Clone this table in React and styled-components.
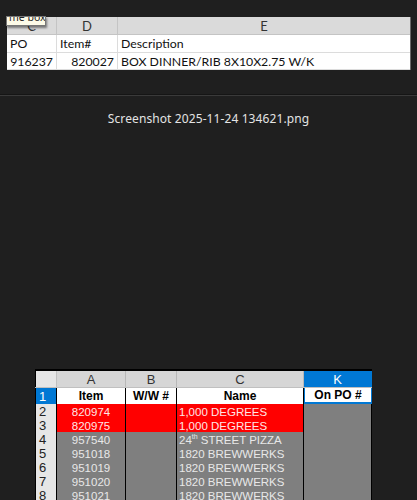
import React from 'react';
import styled, { createGlobalStyle } from 'styled-components';

const GlobalStyle = createGlobalStyle`
  html, body {
    margin: 0;
    padding: 0;
    background: #1f1f1f;
  }
`;

const Page = styled.div`
  width: 417px;
  height: 500px;
  overflow: hidden;
  display: flex;
  flex-direction: column;
  background: #1f1f1f;
`;

/* ---------- top sheet ---------- */

const TopArea = styled.div`
  padding: 17px 0 0 7px;
  height: 94px;
  box-sizing: border-box;
  flex: none;
`;

const TopSheet = styled.div`
  position: relative;
  width: 403px;
  background: #fff;
  border-right: 1px solid #6a6a6a;
  font-family: Lato, "Open Sans", sans-serif;
  font-size: 12.3px;
  color: #111;
`;

const TopRow = styled.div`
  display: grid;
  grid-template-columns: 50px 61px 1fr;
  height: ${({ $h }) => $h}px;
  background: ${({ $head }) => ($head ? '#dadada' : '#fff')};
  border-bottom: 1px solid ${({ $head }) => ($head ? '#c4c4c4' : '#dcdcdc')};
`;

const TopCell = styled.div`
  display: flex;
  align-items: center;
  justify-content: ${({ $align }) => $align || 'flex-start'};
  padding: 0 3px;
  border-right: 1px solid ${({ $head }) => ($head ? '#c4c4c4' : '#dcdcdc')};
  color: ${({ $head }) => ($head ? '#333' : '#111')};
  font-size: ${({ $head }) => ($head ? '13px' : 'inherit')};
  white-space: nowrap;
  overflow: hidden;
  &:last-child {
    border-right: none;
  }
`;

const Tip = styled.div`
  position: absolute;
  left: -1px;
  top: -1px;
  width: 40px;
  height: 10px;
  overflow: hidden;
  white-space: nowrap;
  background: #fdfbe8;
  border: 1px solid #777;
  box-shadow: 1px 2px 2px rgba(0, 0, 0, 0.45);
  font-family: "Noto Sans", sans-serif;
  font-size: 10.5px;
  color: #222;
  line-height: 1;
  padding-left: 2px;
  box-sizing: border-box;
`;

const TipText = styled.span`
  display: block;
  margin-top: -5px;
`;

/* ---------- caption ---------- */

const Divider = styled.div`
  flex: none;
  border-top: 1px solid #151515;
  border-bottom: 1px solid #3a3a3a;
`;

const Caption = styled.div`
  margin-top: 14px;
  text-align: center;
  font-family: "Noto Sans", "Open Sans", sans-serif;
  font-size: 12px;
  color: #e4e4e4;
  letter-spacing: 0.1px;
`;

const Spacer = styled.div`
  flex: 1;
`;

/* ---------- bottom sheet ---------- */

const BottomSheet = styled.div`
  margin-left: 35px;
  width: 337px;
  border-top: 2px solid #000;
  flex: none;
  height: 129px;
  overflow: hidden;
  font-family: "Liberation Sans", Arial, sans-serif;
  font-size: 11px;
`;

const Row = styled.div`
  display: grid;
  grid-template-columns: 22px 69px 51px 127px 68px;
  height: ${({ $h }) => $h}px;
  box-sizing: border-box;
  border-bottom: 1px solid ${({ $line }) => $line || '#000'};
`;

const RowNum = styled.div`
  display: flex;
  align-items: center;
  padding-left: 3px;
  background: ${({ $active }) => ($active ? '#0078d4' : '#e6e6e6')};
  color: ${({ $active }) => ($active ? '#fff' : '#222')};
  font-size: 13px;
  border-right: 1px solid #000;
  border-left: 1px solid #000;
`;

const ColHead = styled.div`
  display: flex;
  align-items: center;
  justify-content: center;
  background: ${({ $sel }) => ($sel ? '#0078d4' : '#d6d6d6')};
  color: ${({ $sel }) => ($sel ? '#fff' : '#333')};
  border-right: 1px solid ${({ $sel }) => ($sel ? '#0078d4' : '#b8b8b8')};
  font-size: 13px;
`;

const Corner = styled(ColHead)`
  background: #e6e6e6;
  border-left: 1px solid #000;
  border-right: 1px solid #c0c0c0;
`;

const Title = styled.div`
  display: flex;
  align-items: center;
  justify-content: center;
  background: #fff;
  color: #000;
  font-weight: 900;
  font-size: 12px;
  border-right: 1px solid #000;
  ${({ $sel }) =>
    $sel &&
    `
    border-left: 1px solid #0078d4;
    border-bottom: 2px solid #0078d4;
    border-right: 1px solid #0078d4;
  `}
`;

const Cell = styled.div`
  display: flex;
  align-items: center;
  justify-content: ${({ $center }) => ($center ? 'center' : 'flex-start')};
  padding-left: ${({ $center }) => ($center ? 0 : 2)}px;
  background: ${({ $red }) => ($red ? '#ff0000' : '#7f7f7f')};
  color: ${({ $red }) => ($red ? '#ffe6e6' : '#e8e8e8')};
  border-right: 1px solid #000;
  white-space: nowrap;
  overflow: hidden;
  font-size: 11.5px;
`;

const Sup = styled.sup`
  font-size: 7px;
  vertical-align: 5px;
  line-height: 0;
`;

const Squiggle = styled.span`
  text-decoration: underline wavy #e03030;
  text-decoration-thickness: 1px;
  text-underline-offset: 2px;
`;

const rows = [
  { n: 2, item: '820974', name: '1,000 DEGREES', red: true },
  { n: 3, item: '820975', name: '1,000 DEGREES', red: true },
  { n: 4, item: '957540', name: 'pizza' },
  { n: 5, item: '951018', name: 'brew' },
  { n: 6, item: '951019', name: 'brew' },
  { n: 7, item: '951020', name: 'brew' },
  { n: 8, item: '951021', name: 'brew' },
];

const renderName = (name) => {
  if (name === 'pizza') {
    return (
      <span>
        24<Sup>th</Sup> STREET PIZZA
      </span>
    );
  }
  if (name === 'brew') {
    return (
      <span>
        1820 <Squiggle>BREWWERKS</Squiggle>
      </span>
    );
  }
  return name;
};

export default function App() {
  return (
    <Page>
      <GlobalStyle />
      <TopArea>
        <TopSheet>
          <TopRow $head $h={17}>
            <TopCell $head $align="center">C</TopCell>
            <TopCell $head $align="center">D</TopCell>
            <TopCell $head $align="center">E</TopCell>
          </TopRow>
          <TopRow $h={17}>
            <TopCell>PO</TopCell>
            <TopCell>Item#</TopCell>
            <TopCell>Description</TopCell>
          </TopRow>
          <TopRow $h={16}>
            <TopCell $align="flex-end">916237</TopCell>
            <TopCell $align="flex-end">820027</TopCell>
            <TopCell>BOX DINNER/RIB 8X10X2.75 W/K</TopCell>
          </TopRow>
          <Tip>
            <TipText>me box</TipText>
          </Tip>
        </TopSheet>
      </TopArea>

      <Divider />
      <Caption>Screenshot 2025-11-24 134621.png</Caption>
      <Spacer />

      <BottomSheet>
        <Row $h={17} $line="#c0c0c0">
          <Corner />
          <ColHead>A</ColHead>
          <ColHead>B</ColHead>
          <ColHead>C</ColHead>
          <ColHead $sel>K</ColHead>
        </Row>
        <Row $h={16}>
          <RowNum $active>1</RowNum>
          <Title>Item</Title>
          <Title>W/W #</Title>
          <Title>Name</Title>
          <Title $sel>On PO #</Title>
        </Row>
        {rows.map((r) => (
          <Row key={r.n} $h={14}>
            <RowNum>{r.n}</RowNum>
            <Cell $center $red={r.red}>{r.item}</Cell>
            <Cell $red={r.red} />
            <Cell $red={r.red}>{renderName(r.name)}</Cell>
            <Cell />
          </Row>
        ))}
      </BottomSheet>
    </Page>
  );
}
